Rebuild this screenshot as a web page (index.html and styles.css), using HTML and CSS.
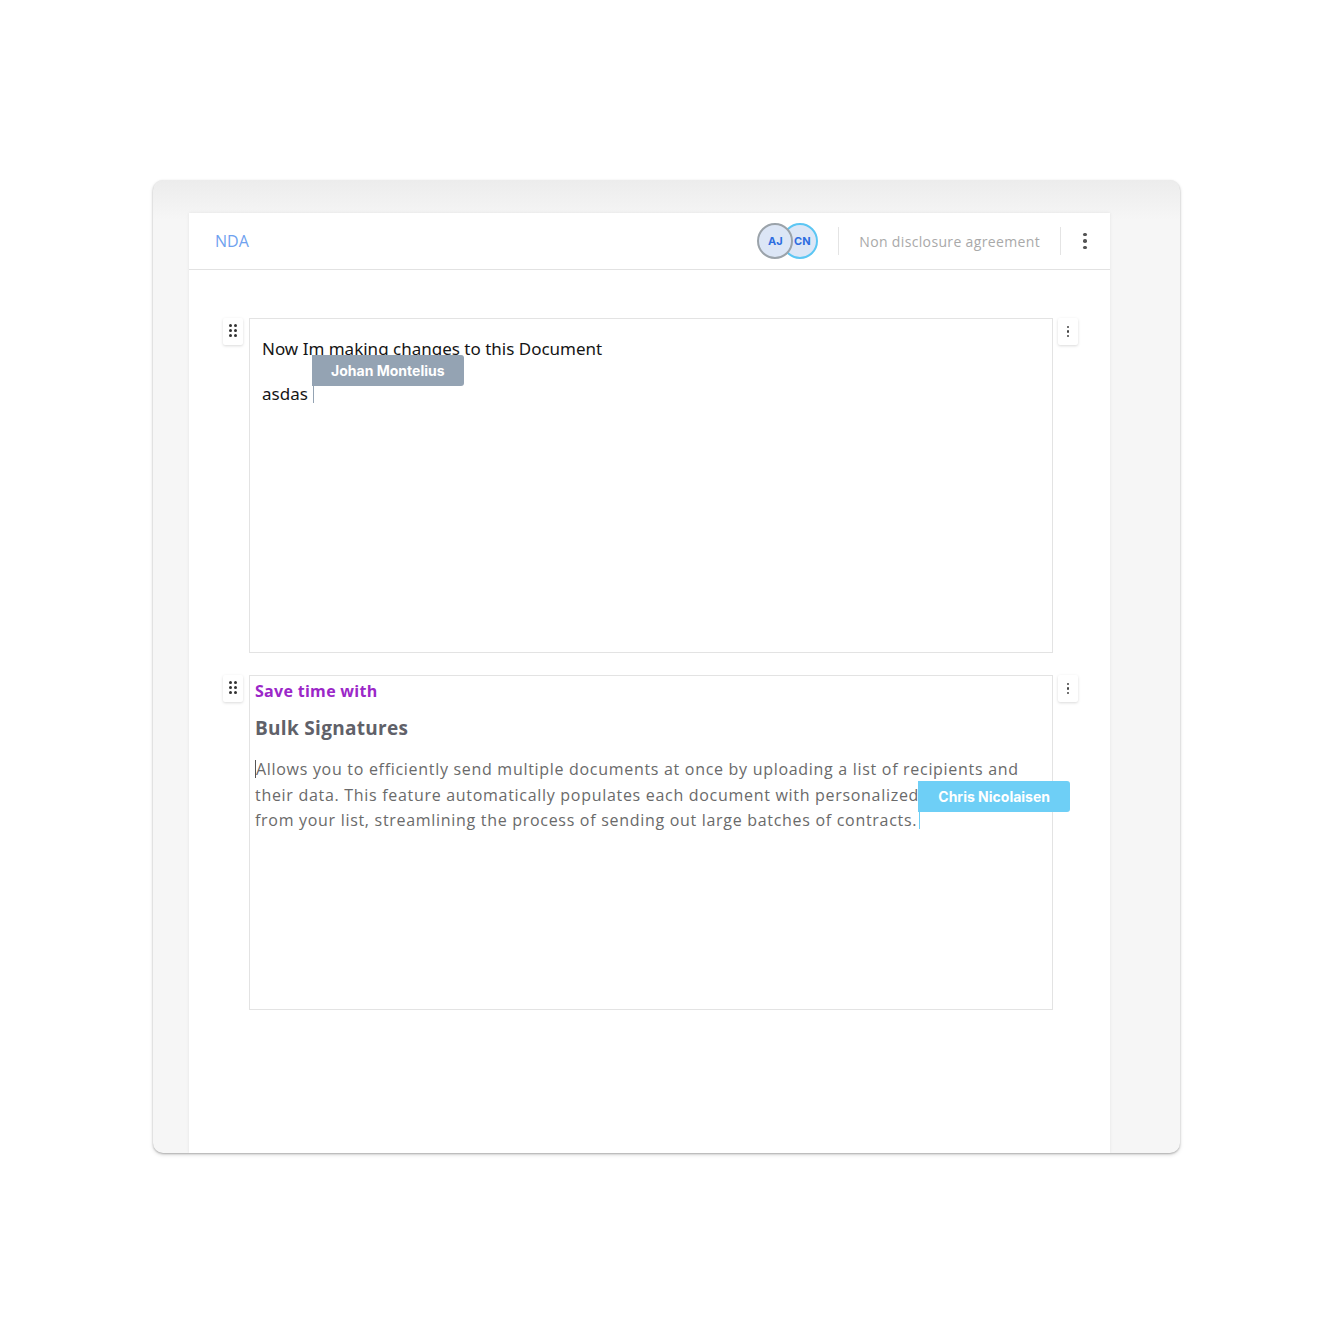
FILE: index.html
```html
<!DOCTYPE html>
<html>
<head>
<meta charset="utf-8">
<link rel="stylesheet" href="styles.css">
</head>
<body>
<div class="stage">
  <div class="frame">
    <div class="page">
      <div class="header">
        <div class="title">NDA</div>
        <div class="avatars">
          <div class="avatar aj">AJ</div>
          <div class="avatar cn">CN</div>
        </div>
        <div class="divider"></div>
        <div class="doc-name">Non disclosure agreement</div>
        <div class="divider"></div>
        <div class="kebab big"><i></i><i></i><i></i></div>
      </div>
      <div class="content">
        <div class="block">
          <div class="handle"><span class="grip"><i></i><i></i><i></i><i></i><i></i><i></i></span></div>
          <div class="box box-plain">
            <p class="line">Now Im making changes to this Document</p>
            <p class="line line2">asdas<span class="caret gray"><span class="tag tag-gray">Johan Montelius</span></span></p>
          </div>
          <div class="menu-btn"><span class="kebab small"><i></i><i></i><i></i></span></div>
        </div>
        <div class="block">
          <div class="handle"><span class="grip"><i></i><i></i><i></i><i></i><i></i><i></i></span></div>
          <div class="box box-rich">
            <div class="eyebrow">Save time with</div>
            <div class="heading">Bulk Signatures</div>
            <p class="para"><span class="caret start"></span>Allows you to efficiently send multiple documents at once by uploading a list of recipients and<br>their data. This feature automatically populates each document with personalized<br>from your list, streamlining the process of sending out large batches of contracts.<span class="caret blue"><span class="tag tag-blue">Chris Nicolaisen</span></span></p>
          </div>
          <div class="menu-btn"><span class="kebab small"><i></i><i></i><i></i></span></div>
        </div>
      </div>
    </div>
  </div>
</div>
</body>
</html>
```
FILE: styles.css
```css
html, body {
  margin: 0;
  padding: 0;
  background: #ffffff;
}
body {
  width: 1334px;
  height: 1334px;
  font-family: "Open Sans", "Liberation Sans", sans-serif;
}
.stage {
  padding: 180px 0 0 153px;
}
.frame {
  width: 1027px;
  height: 973px;
  box-sizing: border-box;
  background: #f6f6f6;
  border-radius: 10px;
  box-shadow: 0 1px 2px rgba(0,0,0,0.25), 0 2px 4px rgba(0,0,0,0.12);
  padding: 33px 70px 0 36px;
  overflow: hidden;
  background-image: linear-gradient(#ececec, #f6f6f6 40px);
}
.page {
  background: #fff;
  height: 940px;
  box-shadow: 0 0 3px rgba(0,0,0,0.08);
}
.header {
  height: 56px;
  border-bottom: 1px solid #e2e2e2;
  display: flex;
  align-items: center;
  padding: 0 22px 0 26px;
}
.title {
  color: #6fa2ef;
  font-size: 16px;
  flex: 1;
}
.avatars {
  display: flex;
  margin-right: 20px;
}
.avatar {
  width: 32px;
  height: 32px;
  border-radius: 50%;
  background: #dce6f6;
  color: #2d6de0;
  font-size: 11px;
  font-weight: 700;
  display: flex;
  align-items: center;
  justify-content: center;
  font-family: "Inter", sans-serif;
}
.avatar.aj {
  border: 2px solid #9ba3aa;
  position: relative;
  z-index: 2;
}
.avatar.cn {
  border: 2px solid #5cc6f3;
  margin-left: -11px;
  padding-left: 4px;
  box-sizing: content-box;
  width: 28px;
}
.divider {
  width: 1px;
  height: 28px;
  background: #e4e4e4;
}
.doc-name {
  color: #a9a9a9;
  font-size: 14px;
  margin: 0 20px;
  letter-spacing: 0.35px;
}
.kebab {
  display: flex;
  flex-direction: column;
  align-items: center;
}
.kebab i {
  display: block;
  border-radius: 50%;
  background: #555;
}
.kebab.big {
  gap: 3px;
  margin-left: 21px;
  width: 6px;
}
.kebab.big i {
  width: 3.5px;
  height: 3.5px;
}
.kebab.small {
  gap: 2px;
}
.kebab.small i {
  width: 2.5px;
  height: 2.5px;
  background: #444;
}
.content {
  padding: 48px 0 0 34px;
  display: flex;
  flex-direction: column;
  gap: 22px;
}
.block {
  display: flex;
  align-items: flex-start;
}
.handle, .menu-btn {
  width: 20px;
  height: 27px;
  background: #fff;
  box-shadow: 0 1px 3px rgba(0,0,0,0.15);
  border-radius: 2px;
  display: flex;
  align-items: center;
  justify-content: center;
}
.handle {
  margin-right: 6px;
}
.menu-btn {
  margin-left: 5px;
}
.grip {
  display: grid;
  grid-template-columns: 3px 3px;
  gap: 2px 2px;
  margin-top: -2px;
}
.grip i {
  width: 3px;
  height: 3px;
  border-radius: 50%;
  background: #333;
}
.box {
  width: 804px;
  height: 335px;
  box-sizing: border-box;
  border: 1px solid #e3e3e3;
}
.box-plain {
  padding: 18px 12px 0 12px;
  font-family: "Noto Sans", "Open Sans", sans-serif;
  color: #151515;
  font-size: 17px;
}
.line {
  margin: 0;
  line-height: 23px;
}
.line2 {
  margin-top: 22px;
}
.caret {
  display: inline-block;
  position: relative;
  width: 1px;
  height: 17px;
  vertical-align: -3px;
  margin-left: 5px;
}
.caret.gray { background: #94a3b3; }
.caret.blue { background: #6ecff6; margin-left: 2px; }
.caret.start {
  background: #555;
  margin: 0 0 0 0;
  height: 18px;
}
.tag {
  position: absolute;
  left: 0;
  bottom: 100%;
  height: 31px;
  width: 152px;
  border-radius: 0 3px 3px 0;
  color: #fff;
  font-family: "Inter", sans-serif;
  font-weight: 700;
  font-size: 14px;
  line-height: 31px;
  text-align: center;
  white-space: nowrap;
  letter-spacing: 0;
}
.tag-gray {
  background: #94a3b3;
  left: -1px;
}
.tag-blue {
  background: #6ecff6;
  left: -1px;
}
.box-rich {
  padding: 4px 5px 0 5px;
  font-family: "Open Sans", sans-serif;
}
.eyebrow {
  color: #9b27c8;
  font-weight: 700;
  font-size: 16px;
  line-height: 22px;
  letter-spacing: 0.3px;
}
.heading {
  color: #606169;
  font-weight: 700;
  font-size: 19px;
  margin-top: 13px;
  line-height: 26px;
  letter-spacing: 0.3px;
}
.para {
  margin: 16px 0 0 0;
  color: #6a6a6a;
  font-size: 16px;
  line-height: 25.5px;
  letter-spacing: 0.7px;
  white-space: nowrap;
}
```
